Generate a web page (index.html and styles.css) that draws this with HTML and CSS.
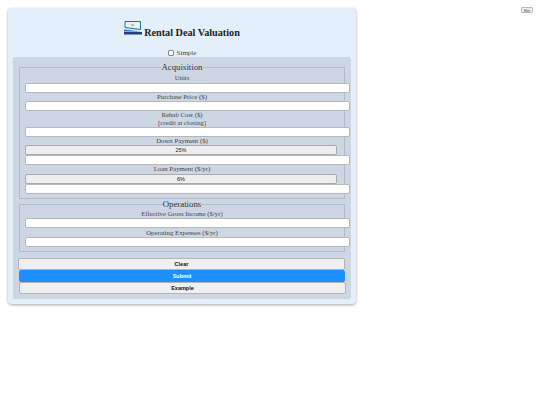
FILE: index.html
```html
<!DOCTYPE html>
<html lang="en">
<head>
<meta charset="utf-8">
<title>Rental Deal Valuation</title>
<link rel="stylesheet" href="styles.css">
</head>
<body>
<main class="card">
  <h1 class="title">
    <svg class="logo" viewBox="0 0 18 14" width="18" height="14" aria-hidden="true">
      <path d="M1 0.5H16.5V8.5L1 6.5Z" fill="#e8f2fb" stroke="#1d6f9f" stroke-width="1"/>
      <circle cx="8.5" cy="4" r="1.3" fill="#e9a25a"/>
      <path d="M0 8.5L17.5 10.5H0Z" fill="#3b6fb0"/>
      <path d="M0 11H18V13.5H0Z" fill="#1f3f7f"/>
    </svg>
    <span>Rental Deal Valuation</span>
  </h1>
  <label class="simple"><input type="checkbox" class="check"> Simple</label>
  <form class="panel">
    <fieldset class="group first">
      <legend>Acquisition</legend>
      <label class="lbl">Units</label>
      <input class="field" type="text">
      <label class="lbl">Purchase Price ($)</label>
      <input class="field" type="text">
      <label class="lbl">Rehab Cost ($)<br>[credit at closing]</label>
      <input class="field" type="text">
      <label class="lbl">Down Payment ($)</label>
      <div class="sel">25%</div>
      <input class="field" type="text">
      <label class="lbl">Loan Payment ($/yr)</label>
      <div class="sel sel-gap">6%</div>
      <input class="field" type="text">
    </fieldset>
    <fieldset class="group second">
      <legend>Operations</legend>
      <label class="lbl">Effective Gross Income ($/yr)</label>
      <input class="field" type="text">
      <label class="lbl lbl-gap">Operating Expenses ($/yr)</label>
      <input class="field" type="text">
    </fieldset>
    <div class="actions">
      <button type="button" class="btn clear">Clear</button>
      <button type="button" class="btn submit">Submit</button>
      <button type="button" class="btn example">Example</button>
    </div>
  </form>
</main>
<button type="button" class="corner">Btn</button>
</body>
</html>
```
FILE: styles.css
```css
* { box-sizing: border-box; }
html, body { height: 100%; }
body {
  margin: 0;
  padding: 7px 7px 0 8px;
  background: #fff;
  display: flex;
  justify-content: space-between;
  align-items: flex-start;
  font-family: "Liberation Serif", serif;
  color: #444;
}
.card {
  width: 348px;
  height: 296px;
  margin-top: 1px;
  padding: 13px 5px 5px;
  background: #e3effb;
  border-radius: 4px;
  box-shadow: 0 1px 3px rgba(0, 0, 0, 0.35);
  display: flex;
  flex-direction: column;
}
.title {
  margin: 0;
  height: 18px;
  flex: none;
  display: flex;
  justify-content: center;
  align-items: flex-end;
  gap: 2px;
  font-size: 10.2px;
  line-height: 12px;
  font-weight: bold;
  color: #222;
}
.logo { display: block; margin-bottom: 4px; }
.simple {
  margin-top: 9px;
  height: 9px;
  flex: none;
  display: flex;
  justify-content: center;
  align-items: center;
  gap: 3px;
  font-size: 7px;
}
.check {
  margin: 0;
  width: 6px;
  height: 6px;
  appearance: none;
  background: #fff;
  border: 0.5px solid #888;
  border-radius: 1px;
}
.panel {
  margin: 0;
  flex: 1;
  padding: 5px 6px 5px;
  background: #cdd7e3;
  border-radius: 2px;
  display: flex;
  flex-direction: column;
}
.group {
  margin: 0;
  min-width: 0;
  padding: 0;
  border: 1px solid #b4bbc5;
  display: flex;
  flex-direction: column;
}
.first { height: 137px; flex: none; }
.second { height: 53px; flex: none; }
legend {
  padding: 0;
  margin: 0 auto;
  font-size: 8.8px;
  line-height: 10px;
  color: #333;
}
.lbl {
  display: block;
  flex: none;
  text-align: center;
  font-size: 6.8px;
  line-height: 8px;
}
.first > .lbl:first-of-type { margin-top: 2px; margin-bottom: 1px; }
.second > .lbl:first-of-type { margin-top: 1px; }
.lbl-gap { margin-top: 1px; }
.field {
  display: block;
  flex: none;
  width: 325px;
  height: 10px;
  margin: 0 0 0 5px;
  padding: 0;
  background: #fff;
  border: 0.5px solid #b4b8bd;
  border-radius: 2px;
}
.sel {
  flex: none;
  width: 312px;
  height: 10px;
  margin-left: 5px;
  background: #eee;
  border: 0.5px solid #aaa;
  border-radius: 2px;
  font-family: "Liberation Sans", sans-serif;
  font-size: 5.5px;
  line-height: 9px;
  text-align: center;
  color: #222;
}
.sel-gap { margin-top: 1px; }
.actions {
  margin-top: 6px;
  flex: none;
  display: flex;
  flex-direction: column;
}
.btn {
  display: block;
  height: 12px;
  padding: 0;
  border: 0.5px solid #b4b4b4;
  border-radius: 2px;
  background: #efefef;
  font-family: "Liberation Sans", sans-serif;
  font-size: 5.5px;
  font-weight: bold;
  color: #111;
  text-align: center;
}
.clear { width: 327px; margin-left: -1px; }
.submit { width: 326px; background: #1e8fff; border-color: #1e8fff; color: #fff; }
.example { width: 327px; }
.corner {
  flex: none;
  width: 12px;
  height: 6px;
  padding: 0;
  background: #efefef;
  border: 0.5px solid #bbb;
  border-radius: 1px;
  font-family: "Liberation Sans", sans-serif;
  font-size: 4px;
  line-height: 5px;
  color: #444;
}
```
